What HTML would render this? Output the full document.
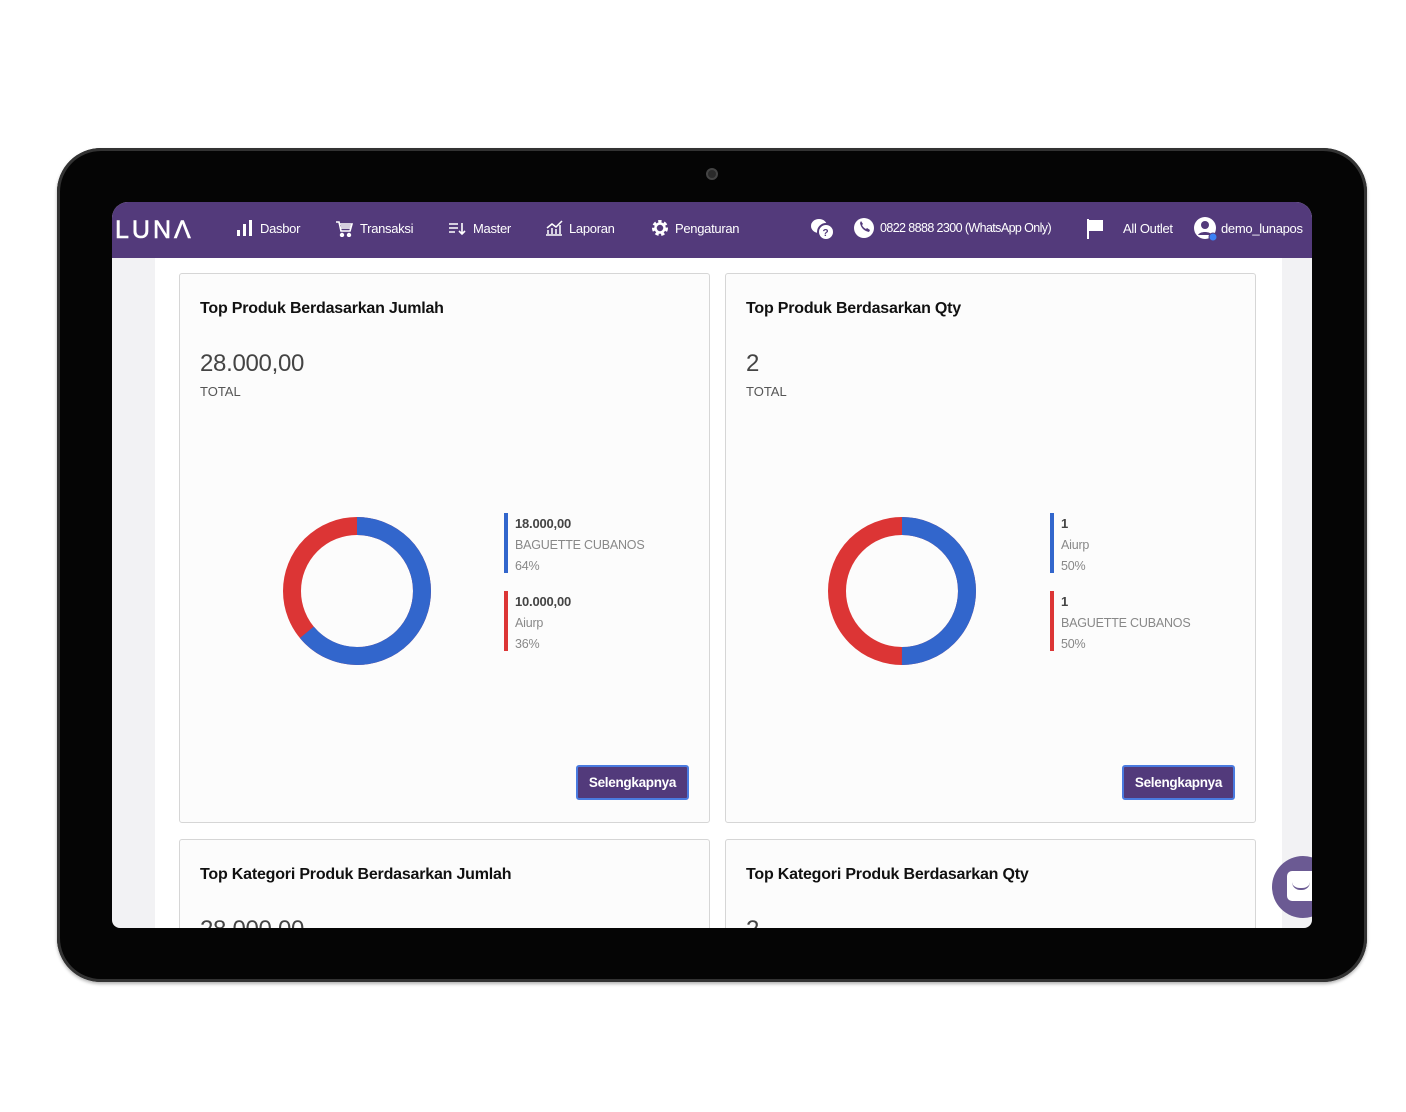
<!DOCTYPE html>
<html><head><meta charset="utf-8"><style>
*{margin:0;padding:0;box-sizing:border-box}
html,body{width:1406px;height:1112px;overflow:hidden}
body{background:#fff;position:relative;font-family:"Liberation Sans",sans-serif}
.frame{position:absolute;left:57px;top:148px;width:1310px;height:834px;border-radius:44px;background:#050505;box-shadow:inset 0 0 0 3px #333, 0 2px 3px rgba(0,0,0,.3)}
.cam{position:absolute;left:706px;top:168px;width:12px;height:12px;border-radius:50%;background:#2a2a2a;border:2px solid #444}
.screen{position:absolute;left:112px;top:202px;width:1200px;height:726px;border-radius:16px 16px 8px 8px;overflow:hidden;background:#f2f2f4}
.nav{position:absolute;left:0;top:0;width:1200px;height:56px;background:#533a7b;color:#fff;font-size:13px;letter-spacing:-0.3px}
.nav span{position:absolute;top:19px;white-space:nowrap}
.logo{position:absolute;left:3px;top:14px;font-size:25px;letter-spacing:3px;color:#fff;-webkit-text-stroke:0.6px #fff}
.main{position:absolute;left:43px;top:56px;width:1127px;height:670px;background:#fff}
.card{position:absolute;width:531px;height:550px;border:1px solid #d6d6d6;border-radius:3px;background:#fcfcfc}
.card h3{position:absolute;left:20px;top:26px;font-size:16px;font-weight:bold;color:#111;letter-spacing:-0.2px}
.big{position:absolute;left:20px;top:76px;font-size:24px;color:#444;letter-spacing:-0.3px}
.tot{position:absolute;left:20px;top:110px;font-size:13px;color:#555}
.leg{position:absolute;border-left:4px solid;padding-left:7px;font-size:12.5px;color:#888;line-height:21px;height:60px;letter-spacing:-0.2px}
.leg b{color:#444;font-size:13px}
.btn{position:absolute;right:20px;top:491px;width:113px;height:35px;background:#523a7b;border:2px solid #4a7be0;border-radius:3px;color:#fff;font-weight:bold;font-size:13.5px;text-align:center;line-height:31px;letter-spacing:-0.3px}
</style></head><body>
<div class="frame"></div>
<div class="cam"></div>
<div class="screen">
 <div class="main"></div>
 <div class="nav">
  <div class="logo">LUNΛ</div>
  <svg style="position:absolute;left:124px;top:18px" width="18" height="16"><rect x="1" y="10" width="3" height="6" fill="#fff"/><rect x="7" y="4" width="3" height="12" fill="#fff"/><rect x="13" y="0" width="3" height="16" fill="#fff"/></svg>
  <span style="left:148px">Dasbor</span>
  <svg style="position:absolute;left:223px;top:18px" width="18" height="17" fill="none" stroke="#fff" stroke-width="1.6"><path d="M1 2h3l2 9h9l2-7H5M6 6h10M6 8h10"/><circle cx="7" cy="15" r="1.4" fill="#fff"/><circle cx="14" cy="15" r="1.4" fill="#fff"/></svg>
  <span style="left:248px">Transaksi</span>
  <svg style="position:absolute;left:336px;top:20px" width="18" height="14" stroke="#fff" stroke-width="1.6" fill="none"><path d="M1 2h9M1 6h9M1 10h6M14 1v11M11 9l3 3 3-3"/></svg>
  <span style="left:361px">Master</span>
  <svg style="position:absolute;left:433px;top:18px" width="18" height="16" stroke="#fff" stroke-width="1.5" fill="none"><path d="M1 15h16M3 14v-4M7 14v-6M11 14v-5M15 14V5M2 8l5-4 4 3 6-6"/></svg>
  <span style="left:457px">Laporan</span>
  <svg style="position:absolute;left:539px;top:17px" width="18" height="18" viewBox="0 0 18 18"><circle cx="9" cy="9" r="6" fill="none" stroke="#fff" stroke-width="4" stroke-dasharray="3 2.3"/><circle cx="9" cy="9" r="4.5" fill="none" stroke="#fff" stroke-width="2.5"/></svg>
  <span style="left:563px">Pengaturan</span>
  <svg style="position:absolute;left:698px;top:15px" width="26" height="24"><ellipse cx="9" cy="9" rx="8" ry="7" fill="#fff"/><circle cx="16" cy="15" r="8" fill="#fff" stroke="#533a7b" stroke-width="2"/><text x="12.5" y="19" font-size="10" font-weight="bold" fill="#533a7b" font-family="Liberation Sans">?</text></svg>
  <svg style="position:absolute;left:741px;top:15px" width="22" height="22"><circle cx="11" cy="11" r="10" fill="#fff"/><path d="M7 6c1 5 4 8 9 9l1-2-3-2-1 1c-2-1-3-2-4-4l1-1-2-3z" fill="#533a7b"/></svg>
  <span style="left:768px;font-size:12.5px;letter-spacing:-0.6px">0822 8888 2300 (WhatsApp Only)</span>
  <svg style="position:absolute;left:974px;top:17px" width="18" height="20"><rect x="1" y="0" width="2" height="20" fill="#fff"/><path d="M3 1h14v11H3z" fill="#fff"/></svg>
  <span style="left:1011px">All Outlet</span>
  <svg style="position:absolute;left:1082px;top:14px" width="26" height="26"><circle cx="11" cy="12" r="11" fill="#fff"/><circle cx="11" cy="9" r="4" fill="#533a7b"/><path d="M4 19c2-4 12-4 14 0" fill="#533a7b"/><circle cx="19" cy="21" r="4" fill="#3b82f6" stroke="#533a7b" stroke-width="1"/></svg>
  <span style="left:1109px">demo_lunapos</span>
 </div>
</div>
<div class="card" style="left:179px;top:273px">
 <h3>Top Produk Berdasarkan Jumlah</h3>
 <div class="big">28.000,00</div><div class="tot">TOTAL</div>
 <svg style="position:absolute;left:101px;top:239px" width="152" height="160"><g transform="rotate(-90 76 78)"><circle cx="76" cy="78" r="65" fill="none" stroke="#dc3535" stroke-width="18"/><circle cx="76" cy="78" r="65" fill="none" stroke="#3266cc" stroke-width="18" stroke-dasharray="261.4 500"/></g></svg>
 <div class="leg" style="left:324px;top:239px;border-color:#3266cc"><b>18.000,00</b><br>BAGUETTE CUBANOS<br>64%</div>
 <div class="leg" style="left:324px;top:317px;border-color:#dc3535"><b>10.000,00</b><br>Aiurp<br>36%</div>
 <div class="btn">Selengkapnya</div>
</div>
<div class="card" style="left:725px;top:273px">
 <h3>Top Produk Berdasarkan Qty</h3>
 <div class="big">2</div><div class="tot">TOTAL</div>
 <svg style="position:absolute;left:100px;top:239px" width="152" height="160"><g transform="rotate(-90 76 78)"><circle cx="76" cy="78" r="65" fill="none" stroke="#dc3535" stroke-width="18"/><circle cx="76" cy="78" r="65" fill="none" stroke="#3266cc" stroke-width="18" stroke-dasharray="204.2 500"/></g></svg>
 <div class="leg" style="left:324px;top:239px;border-color:#3266cc"><b>1</b><br>Aiurp<br>50%</div>
 <div class="leg" style="left:324px;top:317px;border-color:#dc3535"><b>1</b><br>BAGUETTE CUBANOS<br>50%</div>
 <div class="btn">Selengkapnya</div>
</div>
<div style="position:absolute;left:112px;top:839px;width:1200px;height:89px;overflow:hidden;border-radius:0 0 8px 8px">
 <div class="card" style="left:67px;top:0">
  <h3>Top Kategori Produk Berdasarkan Jumlah</h3><div class="big">28.000,00</div>
 </div>
 <div class="card" style="left:613px;top:0">
  <h3>Top Kategori Produk Berdasarkan Qty</h3><div class="big">2</div>
 </div>
</div>
<div style="position:absolute;left:1272px;top:856px;width:40px;height:62px;overflow:hidden">
 <div style="width:62px;height:62px;border-radius:50%;background:#6b5a93;position:relative">
  <div style="position:absolute;left:15px;top:15px;width:30px;height:30px;background:#fff;border-radius:5px"></div>
  <div style="position:absolute;left:20px;top:26px;width:18px;height:8px;border-bottom:2px solid #6b5a93;border-radius:0 0 10px 10px"></div>
 </div>
</div>
</body></html>
